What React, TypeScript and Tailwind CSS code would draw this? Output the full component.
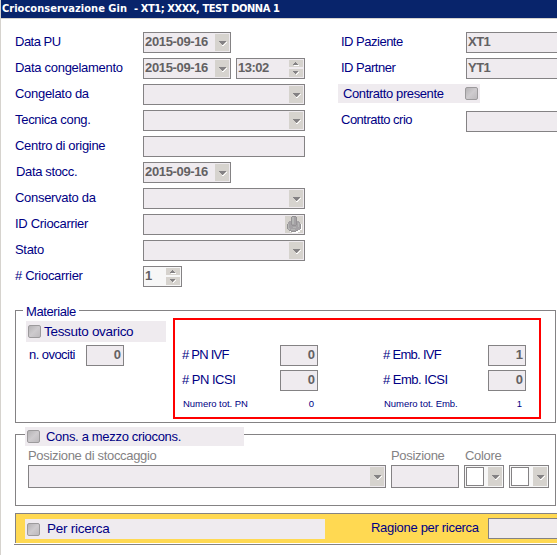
import type { ReactNode } from 'react';
import clsx from 'clsx';

const DownArrow = () => (
  <svg width="8" height="6" viewBox="0 0 8 6" shapeRendering="crispEdges">
    <path d="M7 1h1v1h-1v1h-1v1h-1v1h-2v-1h1z" fill="#fff" />
    <path d="M0 0h7v1h-1v1h-1v1h-1v1h-1v-1h-1v-1h-1v-1h-1z" fill="#848284" />
  </svg>
);

const UpArrow = () => (
  <svg width="6" height="4" viewBox="0 0 6 4" shapeRendering="crispEdges">
    <path d="M1 3h5v1h-5z" fill="#fff" />
    <path d="M2 0h1v1h1v1h1v1h-5v-1h1v-1h1z" fill="#848284" />
  </svg>
);

const SmallDownArrow = () => (
  <svg width="6" height="4" viewBox="0 0 6 4" shapeRendering="crispEdges">
    <path d="M5 1h1v1h-1v1h-1v1h-1v-1z" fill="#fff" />
    <path d="M0 0h5v1h-1v1h-1v1h-1v-1h-1v-1h-1z" fill="#848284" />
  </svg>
);

const DropButton = () => (
  <button className="flex w-3.5 shrink-0 items-center justify-center self-stretch bg-[#d6d3ce] pt-0.5 pl-px">
    <DownArrow />
  </button>
);

const Spinner = () => (
  <div className="flex w-3.5 shrink-0 flex-col gap-0.5">
    <button className="flex h-[7px] items-center justify-center bg-[#d6d3ce]">
      <UpArrow />
    </button>
    <button className="flex h-2 items-center justify-center bg-[#d6d3ce]">
      <SmallDownArrow />
    </button>
  </div>
);

const CarrierButton = () => (
  <button className="w-[18px] shrink-0 bg-[#d6d3ce]">
    <svg width="18" height="17" viewBox="0 0 18 17" shapeRendering="crispEdges">
      <path d="M5 7h10v1h2v6h-2v2h-2v1H7v-1H5z" fill="#fff" />
      <path
        d="M7 0h4v1h1v4h2v1h1v2h1v5h-1v1h-2v1h-2v1H6v-1H4v-1H3v-1H2V8h1V6h1V5h2V1h1z"
        fill="#a5a2a5"
      />
      <path d="M3 8h1v4h1v2H4v-1H3zM6 13h4v1H6zM13 7h1v4h-1zM8 11h3v1H8z" fill="#b5b6b5" />
      <path d="M7 1h2v7H7z" fill="#b5b6b5" />
      <path d="M6 1h1v8H6zM7 0h4v1H7zM11 1h1v8h-1zM7 9h4v1H7z" fill="#949294" />
      <path d="M2 8h1v5H2zM15 8h1v5h-1zM4 14h2v1H4zM6 15h5v1H6zM11 14h2v1h-2z" fill="#949294" />
    </svg>
  </button>
);

interface FieldProps {
  className: string;
  value?: string;
  align?: 'left' | 'right';
  children?: ReactNode;
}

const Field = ({ className, value, align = 'left', children }: FieldProps) => (
  <div
    className={clsx(
      'flex shrink-0 border border-[#848284] p-px text-[13px] leading-[15px] font-bold text-[#636163]',
      className,
    )}
  >
    <span
      className={clsx(
        'flex-1 whitespace-nowrap',
        align === 'right' && 'pr-px text-right',
      )}
    >
      {value}
    </span>
    {children}
  </div>
);

const Checkbox = () => (
  <span className="size-[13px] shrink-0 rounded-[2px] border border-[#9c9a9c] bg-linear-to-br from-[#b5b3b5] via-[#cecbce] to-[#bdbabd]" />
);

interface RowProps {
  label: string;
  tracking?: string;
  children: ReactNode;
}

const Row = ({ label, tracking = 'tracking-[-0.3px]', children }: RowProps) => (
  <div className="flex h-[21px] gap-[5px]">
    <span className={clsx('w-[123px] leading-[19px] whitespace-nowrap', tracking)}>
      {label}
    </span>
    {children}
  </div>
);

const DateField = () => (
  <Field className="w-[88px] bg-[#efebef] tracking-[-0.35px]" value="2015-09-16">
    <DropButton />
  </Field>
);

const SelectField = () => (
  <Field className="w-[162px] bg-[#efebef]">
    <DropButton />
  </Field>
);

const ColorField = () => (
  <div className="flex h-[23px] w-10 justify-between border border-[#848284] bg-[#f7f7f7] p-px">
    <span className="w-[18px] border border-[#848284] bg-white" />
    <DropButton />
  </div>
);

const Counter = ({ value }: { value: string }) => (
  <Field className="h-[21px] w-[38px] bg-[#efebef]" value={value} align="right" />
);

interface CountGroupProps {
  rows: { label: string; tracking: string; value: string }[];
  total: string;
  totalLabel: string;
  className: string;
  labelWidth: string;
}

const CountGroup = ({ rows, total, totalLabel, className, labelWidth }: CountGroupProps) => (
  <div className={clsx('flex flex-col gap-1', className)}>
    {rows.map((row) => (
      <div key={row.label} className="flex h-[21px]">
        <span className={clsx('leading-[19px] whitespace-nowrap', labelWidth, row.tracking)}>
          {row.label}
        </span>
        <Counter value={row.value} />
      </div>
    ))}
    <div className="flex justify-between pr-1 pl-px text-[9.5px] leading-[17px]">
      <span className="tracking-[-0.05px]">{totalLabel}</span>
      <span>{total}</span>
    </div>
  </div>
);

const LeftColumn = () => (
  <div className="flex w-[323px] shrink-0 flex-col gap-[5px]">
    <Row label="Data PU" tracking="tracking-[-0.5px]">
      <DateField />
    </Row>
    <Row label="Data congelamento">
      <DateField />
      <Field className="w-[69px] bg-[#efebef] tracking-[-0.5px]" value="13:02">
        <Spinner />
      </Field>
    </Row>
    <Row label="Congelato da">
      <SelectField />
    </Row>
    <Row label="Tecnica cong.">
      <SelectField />
    </Row>
    <Row label="Centro di origine">
      <Field className="w-[162px] bg-[#efebef]" />
    </Row>
    <Row label="Data stocc." tracking="pl-px tracking-[-0.35px]">
      <DateField />
    </Row>
    <Row label="Conservato da">
      <SelectField />
    </Row>
    <Row label="ID Criocarrier">
      <Field className="w-[162px] bg-[#efebef]">
        <CarrierButton />
      </Field>
    </Row>
    <Row label="Stato">
      <SelectField />
    </Row>
    <Row label="# Criocarrier">
      <Field className="w-[39px] bg-[#f7f7f7]" value="1">
        <Spinner />
      </Field>
    </Row>
  </div>
);

const RightColumn = () => (
  <div className="flex w-[220px] shrink-0 flex-col gap-[5px] tracking-[-0.5px]">
    <div className="flex h-[21px] pl-[3px]">
      <span className="w-[125px] shrink-0 leading-[19px]">ID Paziente</span>
      <Field className="w-24 bg-[#efebef]" value="XT1" />
    </div>
    <div className="flex h-[21px] pl-[3px]">
      <span className="w-[125px] shrink-0 leading-[19px]">ID Partner</span>
      <Field className="w-24 bg-[#efebef]" value="YT1" />
    </div>
    <div className="mb-0.5 flex h-[19px] w-[142px] items-center justify-between bg-[#efebef] pr-0.5 pl-[5px] tracking-[-0.4px]">
      <span>Contratto presente</span>
      <Checkbox />
    </div>
    <div className="flex h-[22px] pl-[3px]">
      <span className="w-[125px] shrink-0 leading-[19px]">Contratto crio</span>
      <Field className="mt-px h-[21px] w-24 bg-[#efebef]" />
    </div>
  </div>
);

const MaterialePanel = () => (
  <section className="mt-[23px] ml-3.5 h-[113px] w-[541px] border border-[#848284]">
    <h2 className="-mt-[9px] ml-[7px] h-[19px] w-14 bg-white pl-[3px] leading-[19px] tracking-[-0.4px]">
      Materiale
    </h2>
    <div className="flex pl-2.5">
      <div className="w-[147px] shrink-0">
        <div className="flex h-[21px] w-[140px] items-center gap-[3px] bg-[#efebef] pl-0.5 text-[13.5px] tracking-[-0.3px]">
          <Checkbox />
          <span className="leading-[21px]">Tessuto ovarico</span>
        </div>
        <div className="mt-[3px] flex pl-[3px]">
          <span className="w-[57px] leading-[19px] tracking-[-0.55px]">n. ovociti</span>
          <Counter value="0" />
        </div>
      </div>
      <div className="-mt-[3px] flex h-[101px] w-[368px] shrink-0 border-2 border-[#ff0000] pt-[25px] pl-[7px]">
        <CountGroup
          className="w-[136px]"
          labelWidth="w-[98px]"
          rows={[
            { label: '# PN IVF', tracking: 'tracking-[-0.75px]', value: '0' },
            { label: '# PN ICSI', tracking: 'tracking-[-0.5px]', value: '0' },
          ]}
          totalLabel="Numero tot. PN"
          total="0"
        />
        <CountGroup
          className="ml-[65px] w-[143px]"
          labelWidth="w-[105px]"
          rows={[
            { label: '# Emb. IVF', tracking: 'tracking-[-0.7px]', value: '1' },
            { label: '# Emb. ICSI', tracking: 'tracking-[-0.5px]', value: '0' },
          ]}
          totalLabel="Numero tot. Emb."
          total="1"
        />
      </div>
    </div>
  </section>
);

const StoragePanel = () => (
  <section className="mt-[11px] ml-3.5 h-[72px] w-[541px] border border-[#848284] tracking-[-0.32px]">
    <div className="-mt-2 ml-[9px] flex h-[19px] w-[219px] items-center gap-1.5 bg-[#efebef] pl-0.5">
      <Checkbox />
      <span className="leading-[19px]">Cons. a mezzo criocons.</span>
    </div>
    <div className="ml-3 flex gap-[5px] text-[#848284]">
      <div>
        <div className="leading-[19px]">Posizione di stoccaggio</div>
        <Field className="h-[23px] w-[358px] bg-[#efebef]">
          <DropButton />
        </Field>
      </div>
      <div>
        <div className="leading-[19px]">Posizione</div>
        <Field className="h-[23px] w-[68px] bg-[#efebef]" />
      </div>
      <div>
        <div className="pl-px leading-[19px]">Colore</div>
        <div className="flex gap-[5px]">
          <ColorField />
          <ColorField />
        </div>
      </div>
    </div>
  </section>
);

const ResearchBar = () => (
  <div className="mt-[7px] ml-[13px] border-b border-[#848284] pb-px">
    <div className="ml-px flex h-[30px] border-t border-l border-[#848284] bg-[#ffd952]">
      <div className="mt-[5px] ml-[9px] flex h-5 w-[300px] shrink-0 items-center gap-[7px] bg-[#efebef] pl-0.5 text-[13.5px] tracking-[-0.25px]">
        <Checkbox />
        <span className="leading-[18px]">Per ricerca</span>
      </div>
      <span className="mt-1 ml-[46px] w-[117px] shrink-0 leading-[19px] tracking-[-0.3px] whitespace-nowrap">
        Ragione per ricerca
      </span>
      <Field className="mt-1 h-[21px] w-20 bg-[#efebef]" />
    </div>
  </div>
);

const App = () => {
  return (
    <main className="h-[555px] w-[557px] overflow-hidden border-l border-[#d6d3ce] bg-white font-['Liberation_Sans',Arial,sans-serif] text-[13px] text-[#000084]">
      <header className="h-[19px] border-b border-[#d6d3ce] bg-[#08246b] pl-px font-['DejaVu_Sans_Condensed','DejaVu_Sans',sans-serif] text-[11px] leading-[18px] font-bold whitespace-pre text-white">
        <span className="tracking-[0.03px]">{'Crioconservazione Gin  '}</span>
        <span className="tracking-[-0.42px]">- XT1; XXXX, TEST DONNA 1</span>
      </header>
      <div className="flex pt-[13px] pl-3.5">
        <LeftColumn />
        <RightColumn />
      </div>
      <MaterialePanel />
      <StoragePanel />
      <ResearchBar />
    </main>
  );
};

export default App;
